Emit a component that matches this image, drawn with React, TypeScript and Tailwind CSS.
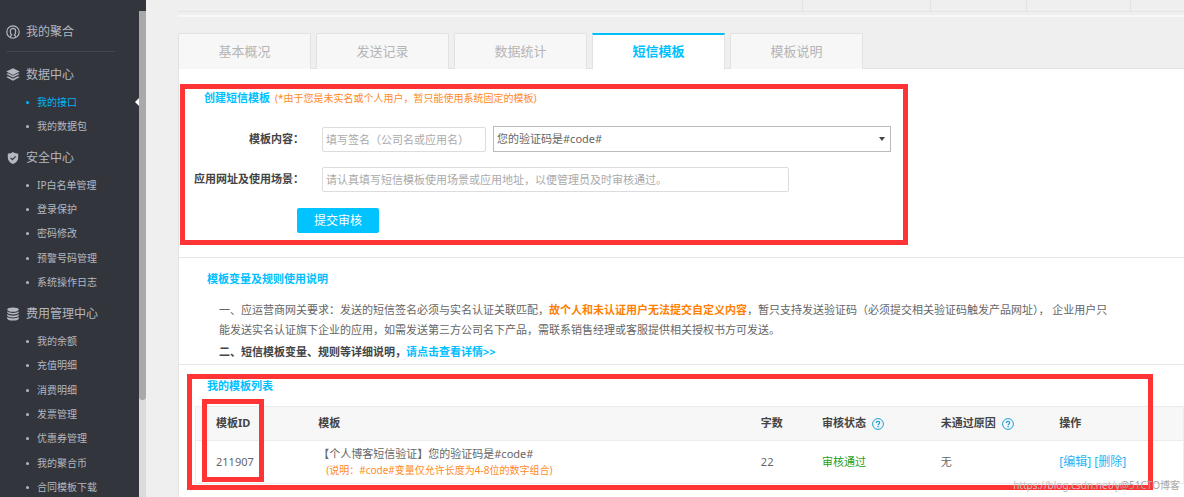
import type { ReactNode } from 'react';

function UserIcon() {
  return (
    <svg viewBox="0 0 14 14" className="size-3.5" fill="none" stroke="currentColor" strokeWidth="1.2" aria-hidden="true">
      <circle cx="7" cy="7" r="6.2" />
      <path d="M4.4 12.3c-.4-1.2.4-1.9 1.2-2.4C4.500 9 4.300 7.600 4.300 6.200 4.300 4.400 5.400 3.300 7 3.300s2.700 1.100 2.700 2.900c0 1.400-.2 2.800-1.300 3.700.8.5 1.600 1.200 1.200 2.400" />
    </svg>
  );
}

function LayersIcon() {
  return (
    <svg viewBox="0 0 14 14" className="size-3.5" fill="currentColor" aria-hidden="true">
      <path d="M7 .3 13.700 3.600 7 7 .3 3.600z" />
      <path d="M.3 6 2 5.200 7 7.800l5-2.600 1.700.8L7 9.500z" />
      <path d="M.3 9 2 8.200l5 2.600 5-2.600 1.700.8L7 12.800z" />
    </svg>
  );
}

function ShieldIcon() {
  return (
    <svg viewBox="0 0 14 14" className="size-3.5" aria-hidden="true">
      <path d="M7 1c1.700 1 3.300 1.500 5.200 1.600v4.200c0 2.900-2.200 5-5.200 6.200-3-1.200-5.200-3.300-5.200-6.200V2.600C3.700 2.500 5.300 2 7 1z" fill="currentColor" />
      <path d="m4.600 6.800 1.800 1.800 3.200-3.300" fill="none" stroke="#32353c" strokeWidth="1.200" />
    </svg>
  );
}

function CoinsIcon() {
  return (
    <svg viewBox="0 0 14 14" className="size-3.5" fill="currentColor" aria-hidden="true">
      <ellipse cx="7" cy="2.600" rx="5.800" ry="2.200" />
      <path d="M1.200 4.200c1 1.200 3.300 1.700 5.800 1.700s4.800-.5 5.800-1.700v1.400C12.300 6.900 9.800 7.600 7 7.600s-5.300-.7-5.800-2z" />
      <path d="M1.200 7c1 1.200 3.300 1.700 5.800 1.700s4.800-.5 5.800-1.700v1.400c-.5 1.300-3 2-5.800 2s-5.300-.7-5.800-2z" />
      <path d="M1.200 9.800c1 1.200 3.300 1.700 5.800 1.700s4.800-.5 5.800-1.700v1.600c-.5 1.500-3 2.200-5.800 2.200s-5.300-.7-5.800-2.200z" />
    </svg>
  );
}

function HelpIcon() {
  return (
    <svg viewBox="0 0 12 12" className="size-3 shrink-0" fill="none" stroke="#1c9fd6" aria-hidden="true">
      <circle cx="6" cy="6" r="5.400" strokeWidth="1" />
      <path d="M4.300 4.900c0-1 .7-1.600 1.700-1.600s1.700.6 1.700 1.500c0 1.100-1.600 1.200-1.600 2.400" strokeWidth="1.200" />
      <path d="M6.100 8v1.200" strokeWidth="1.300" />
    </svg>
  );
}

function SideHeading({ icon, children }: { icon: ReactNode; children: ReactNode }) {
  return (
    <h2 className="flex h-[30px] items-center gap-1.5 text-[12px]">
      {icon}
      {children}
    </h2>
  );
}

function SideList({ items, active, height }: { items: string[]; active?: string; height: string }) {
  return (
    <ul className={`grid auto-rows-fr ${height}`}>
      {items.map((item) => (
        <li key={item} className="relative flex items-center">
          <a href="#" className={`flex items-center gap-2 pl-5 text-[10px] ${item === active ? 'text-[#00b7f5]' : ''}`}>
            <span className="size-[3px] rounded-full bg-current" />
            {item}
          </a>
          {item === active && (
            <span className="absolute right-0 border-y-4 border-r-4 border-y-transparent border-r-white" />
          )}
        </li>
      ))}
    </ul>
  );
}

function Sidebar() {
  return (
    <aside className="flex h-screen w-[146px] shrink-0 overflow-hidden bg-[#32353c] text-[#b4b8c0]">
      <nav className="flex-1 pt-[17px] pl-1.5">
        <SideHeading icon={<UserIcon />}>我的聚合</SideHeading>
        <hr className="mt-1 mr-6 mb-2 border-[#42454d]" />
        <SideHeading icon={<LayersIcon />}>数据中心</SideHeading>
        <SideList height="h-[49px]" items={['我的接口', '我的数据包']} active="我的接口" />
        <div className="h-1" />
        <SideHeading icon={<ShieldIcon />}>安全中心</SideHeading>
        <SideList height="h-[122px]" items={['IP白名单管理', '登录保护', '密码修改', '预警号码管理', '系统操作日志']} />
        <div className="h-1" />
        <SideHeading icon={<CoinsIcon />}>费用管理中心</SideHeading>
        <SideList
          height="h-[171px]"
          items={['我的余额', '充值明细', '消费明细', '发票管理', '优惠券管理', '我的聚合币', '合同模板下载']}
        />
      </nav>
      <div className="mt-[11px] w-[7px] bg-[#dcdcdc]">
        <div className="h-4/5 rounded-b-full bg-[#a9a9a9]" />
      </div>
    </aside>
  );
}

const tabs = ['基本概况', '发送记录', '数据统计', '短信模板', '模板说明'];

function Tabs() {
  return (
    <div role="tablist" className="flex gap-[5px] border-b border-[#e2e2e2]">
      {tabs.map((tab) =>
        tab === '短信模板' ? (
          <button
            key={tab}
            role="tab"
            aria-selected="true"
            className="-mb-px h-9 w-[133px] border-x border-t-2 border-x-[#e2e2e2] border-t-[#00bfff] bg-white text-[13px] font-bold text-[#00bfff]"
          >
            {tab}
          </button>
        ) : (
          <button
            key={tab}
            role="tab"
            aria-selected="false"
            className="-mb-px h-9 w-[133px] rounded-t-xs border-x border-t border-[#e2e2e2] bg-[#f7f7f7] text-[13px] text-[#b5b5b5]"
          >
            {tab}
          </button>
        ),
      )}
    </div>
  );
}

function TemplateForm() {
  return (
    <section className="relative h-[189px] border-b border-[#e8e8e8] pt-5">
      <h3 className="pl-[25px] text-[11px] leading-[18px] font-bold text-[#00bfff]">
        创建短信模板 <span className="pl-0.5 text-[10px] font-normal text-[#ff8a1f]">(*由于您是未实名或个人用户，暂只能使用系统固定的模板)</span>
      </h3>
      <form className="mt-[19px]">
        <div className="flex h-[26px] items-center">
          <label htmlFor="sign" className="w-[125px] text-right font-bold text-[#444]">模板内容：</label>
          <input
            id="sign"
            placeholder="填写签名（公司名或应用名）"
            className="ml-[18px] h-[25px] w-[164px] rounded-xs border border-[#dcdcdc] px-[3px] placeholder:text-[#aaa]"
          />
          <div className="relative ml-[7px] w-[398px]">
            <select aria-label="模板内容" className="h-[26px] w-full appearance-none border border-[#bbb] bg-white px-[3px] text-[#666]">
              <option>您的验证码是#code#</option>
            </select>
            <span className="pointer-events-none absolute top-[11px] right-[6px] border-x-[3px] border-t-4 border-x-transparent border-t-[#444]" />
          </div>
        </div>
        <div className="mt-[15px] flex h-[25px] items-center">
          <label htmlFor="scene" className="w-[125px] text-right font-bold whitespace-nowrap text-[#444]">应用网址及使用场景：</label>
          <input
            id="scene"
            placeholder="请认真填写短信模板使用场景或应用地址，以便管理员及时审核通过。"
            className="ml-[18px] h-[25px] w-[467px] rounded-xs border border-[#dcdcdc] px-[3px] placeholder:text-[#aaa]"
          />
        </div>
        <button type="button" className="mt-4 ml-[118px] block h-[25px] w-[82px] rounded-xs bg-[#00c3ff] text-[12px] text-white">
          提交审核
        </button>
      </form>
      <div className="pointer-events-none absolute top-[15px] left-px h-[161px] w-[728px] border-[5px] border-[#ff3535]" />
    </section>
  );
}

function Rules() {
  return (
    <section className="border-b border-[#e8e8e8] pt-3 pb-0.5 pl-7">
      <h3 className="leading-[18px] font-bold text-[#00bfff]">模板变量及规则使用说明</h3>
      <p className="mt-3 pr-7 pl-3 leading-[20px]">
        一、应运营商网关要求：发送的短信签名必须与实名认证关联匹配，
        <strong className="text-[#ff8000]">故个人和未认证用户无法提交自定义内容</strong>
        <span>，暂只支持发送验证码（必须提交相关验证码触发产品网址）， 企业用户只</span>
        <br />
        <span>能发送实名认证旗下企业的应用，如需发送第三方公司名下产品，需联系销售经理或客服提供相关授权书方可发送。</span>
      </p>
      <p className="mt-0.5 pl-3 leading-[20px] font-bold text-[#444]">
        二、短信模板变量、规则等详细说明，
        <a href="#" className="text-[#00bfff]">请点击查看详情&gt;&gt;</a>
      </p>
    </section>
  );
}

function TemplateList() {
  return (
    <section className="relative flex-1 pt-3 pl-4">
      <h3 className="pl-3 leading-[18px] font-bold text-[#00bfff]">我的模板列表</h3>
      <table className="mt-[11px] w-full table-fixed border border-[#ececec] text-left text-[#666]">
        <thead className="bg-[#f7f7f7] text-[#444]">
          <tr className="h-[34px] border-b border-[#ececec]">
            <th className="w-[10.4%] pl-5">模板ID</th>
            <th className="w-[44.8%] pl-5">模板</th>
            <th className="w-[6.2%] pl-5">字数</th>
            <th className="w-[12%] pl-5">
              <span className="flex items-center gap-1.5">审核状态 <HelpIcon /></span>
            </th>
            <th className="w-[12%] pl-5">
              <span className="flex items-center gap-1.5">未通过原因 <HelpIcon /></span>
            </th>
            <th className="pl-5">操作</th>
          </tr>
        </thead>
        <tbody>
          <tr className="h-[43px]">
            <td className="pl-5">211907</td>
            <td className="pl-5 leading-4">
              【个人博客短信验证】您的验证码是#code#
              <div className="pl-2 text-[10px] text-[#ff8a1f]">(说明：#code#变量仅允许长度为4-8位的数字组合)</div>
            </td>
            <td className="pl-5">22</td>
            <td className="pl-5 text-[#22a022]">审核通过</td>
            <td className="pl-5">无</td>
            <td className="pl-5 text-[12px] text-[#1fb4f5]">
              <a href="#">[编辑]</a> <a href="#">[删除]</a>
            </td>
          </tr>
        </tbody>
      </table>
      <div className="pointer-events-none absolute top-[9px] right-[31px] left-2 h-[116px] border-[5px] border-[#ff3535]" />
      <div className="pointer-events-none absolute top-[34px] left-[23px] h-[83px] w-[62px] border-[5px] border-[#ff3535]" />
      <div className="pointer-events-none absolute right-1 bottom-1 text-[10px] leading-4 text-[#c4c4c4]">
        https://blog.csdn.net/y<span className="text-[#a8a8a8]">@51CTO博客</span>
      </div>
    </section>
  );
}

export default function App() {
  return (
    <div className="flex h-screen overflow-hidden bg-[#efefef] font-['Noto_Sans','Noto_Sans_CJK_SC',sans-serif] text-[11px] text-[#666]">
      <Sidebar />
      <main className="flex min-w-0 flex-1 flex-col pl-8">
        <div className="flex h-3 shrink-0 justify-end border-b border-[#e4e4e4]">
          <span className="w-32 border-l border-[#e2e2e2]" />
          <span className="w-24 border-l border-[#e2e2e2]" />
          <span className="w-[104px] border-l border-[#e2e2e2]" />
          <span className="w-[54px] border-l border-[#e2e2e2]" />
        </div>
        <div className="mt-[3px] mb-4 h-0.5 shrink-0 bg-[#f7f7f7]" />
        <Tabs />
        <div className="flex flex-1 flex-col border-l border-[#e2e2e2] bg-white">
          <TemplateForm />
          <Rules />
          <TemplateList />
        </div>
      </main>
    </div>
  );
}
